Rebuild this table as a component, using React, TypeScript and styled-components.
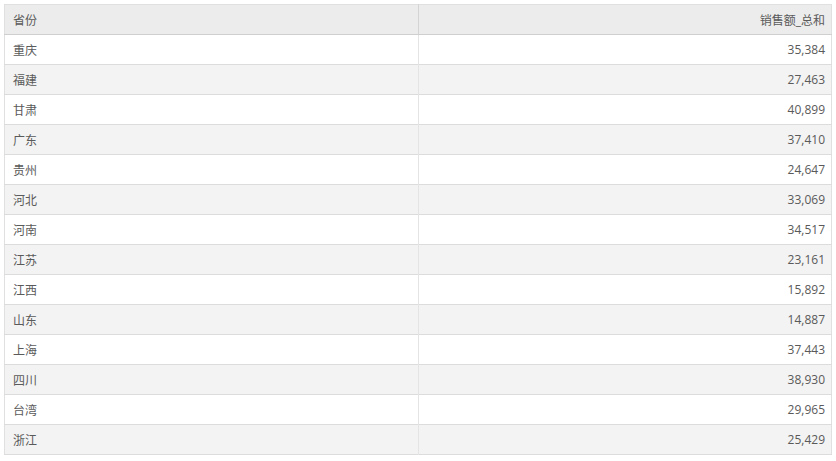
import React from 'react';
import styled, { createGlobalStyle } from 'styled-components';

const rows = [
    { province: '重庆', sales: '35,384' },
    { province: '福建', sales: '27,463' },
    { province: '甘肃', sales: '40,899' },
    { province: '广东', sales: '37,410' },
    { province: '贵州', sales: '24,647' },
    { province: '河北', sales: '33,069' },
    { province: '河南', sales: '34,517' },
    { province: '江苏', sales: '23,161' },
    { province: '江西', sales: '15,892' },
    { province: '山东', sales: '14,887' },
    { province: '上海', sales: '37,443' },
    { province: '四川', sales: '38,930' },
    { province: '台湾', sales: '29,965' },
    { province: '浙江', sales: '25,429' },
];

const GlobalStyle = createGlobalStyle`
    body {
        margin: 0;
        background: #fff;
        font-family: "Open Sans", "Noto Sans CJK SC", sans-serif;
    }
`;

export default function App() {
    return (
        <>
            <GlobalStyle />
            <Wrapper>
                <Grid>
                    <thead>
                        <tr>
                            <HeadCell>省份</HeadCell>
                            <HeadCell $align="right">销售额_总和</HeadCell>
                        </tr>
                    </thead>
                    <tbody>
                        {rows.map((r, i) => (
                            <Row key={r.province} $striped={i % 2 === 1}>
                                <Cell>{r.province}</Cell>
                                <Cell $align="right">{r.sales}</Cell>
                            </Row>
                        ))}
                    </tbody>
                </Grid>
            </Wrapper>
        </>
    );
}

const Wrapper = styled.div`
    padding: 4px;
`;
const Grid = styled.table`
    width: 100%;
    border-collapse: collapse;
    table-layout: fixed;
    border: 1px solid #e0e0e0;
    font-size: 12px;
    color: #5a5a5a;
`;
const HeadCell = styled.th<{ $align?: string }>`
    height: 29px;
    padding: 0 6px 0 8px;
    font-weight: normal;
    text-align: ${(p) => p.$align || 'left'};
    background: #ececec;
    border-bottom: 1px solid #cfcfcf;
    border-right: 1px solid #d4d4d4;
    &:last-child {
        border-right: none;
    }
`;
const Row = styled.tr<{ $striped: boolean }>`
    background: ${(p) => (p.$striped ? '#f3f3f3' : '#fff')};
    border-bottom: 1px solid #dcdcdc;
`;
const Cell = styled.td<{ $align?: string }>`
    height: 29px;
    padding: 0 6px 0 8px;
    text-align: ${(p) => p.$align || 'left'};
    border-right: 1px solid #e4e4e4;
    &:last-child {
        border-right: none;
    }
`;
